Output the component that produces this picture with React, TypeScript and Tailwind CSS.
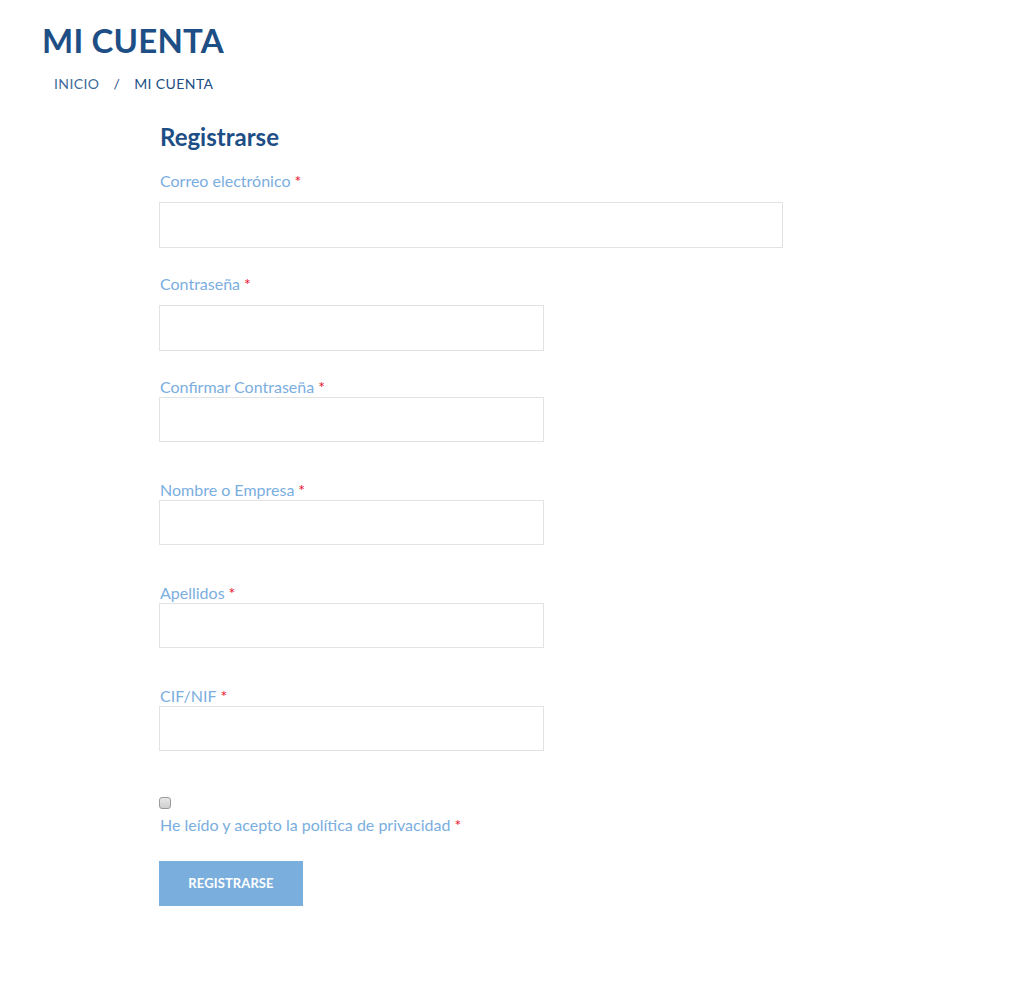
import React from "react";

const Req = () => <span className="text-[#e8112d] ml-[4px]">*</span>;

function Field({ label, wide, gapTop, gapLabel, h }: { label: string; wide?: boolean; gapTop: string; gapLabel: string; h: string }) {
  return (
    <div className={gapTop}>
      <label className="block text-[16px] leading-[20px] text-[#7aaedf]">
        {label}
        <Req />
      </label>
      <input
        className={`block ${gapLabel} ${h} ${wide ? "w-[624px]" : "w-[385px]"} border border-[#e3e3e3] bg-white outline-none`}
      />
    </div>
  );
}

export default function App() {
  return (
    <div className="min-h-[990px] bg-white" style={{ fontFamily: "Lato, 'Open Sans', sans-serif" }}>
      <div className="pl-[42px] pt-[20px]">
        <h1 className="text-[33px] leading-[40px] font-bold text-[#1d4e85] tracking-[0.2px]">MI CUENTA</h1>
        <div className="mt-[14px] pl-[12px] flex items-center text-[14px] leading-[20px] text-[#1d4e85] tracking-[0.4px]">
          <span className="text-[#3d6a9a]">INICIO</span>
          <span className="ml-[14px] mr-[14px]">/</span>
          <span>MI CUENTA</span>
        </div>
      </div>
      <div className="pl-[159px] pt-[28px]">
        <h2 className="text-[24px] leading-[30px] font-bold text-[#1d4e85] pl-[1px]">Registrarse</h2>
        <div className="pl-[1px]">
          <Field label="Correo electrónico" wide gapTop="mt-[19px]" gapLabel="mt-[11px] -ml-[1px]" h="h-[46px]" />
          <Field label="Contraseña" gapTop="mt-[26px]" gapLabel="mt-[11px] -ml-[1px]" h="h-[46px]" />
          <Field label="Confirmar Contraseña" gapTop="mt-[26px]" gapLabel="mt-0 -ml-[1px]" h="h-[45px]" />
          <Field label="Nombre o Empresa" gapTop="mt-[38px]" gapLabel="mt-0 -ml-[1px]" h="h-[45px]" />
          <Field label="Apellidos" gapTop="mt-[38px]" gapLabel="mt-0 -ml-[1px]" h="h-[45px]" />
          <Field label="CIF/NIF" gapTop="mt-[38px]" gapLabel="mt-0 -ml-[1px]" h="h-[45px]" />
          <div className="mt-[46px]">
            <input
              type="checkbox"
              className="block appearance-none w-[12px] h-[12px] -ml-[1px] m-0 rounded-[3px] border border-[#9a9a9a] bg-gradient-to-b from-[#e8e8e8] to-[#cfcfcf]"
            />
            <div className="mt-[6px] text-[16px] leading-[20px] text-[#7aaedf]">
              He leído y acepto la política de privacidad
              <Req />
            </div>
          </div>
          <button className="mt-[26px] -ml-[1px] w-[144px] h-[45px] bg-[#7aaedd] text-white text-[13px] font-bold tracking-[0.1px]">
            REGISTRARSE
          </button>
        </div>
      </div>
    </div>
  );
}
